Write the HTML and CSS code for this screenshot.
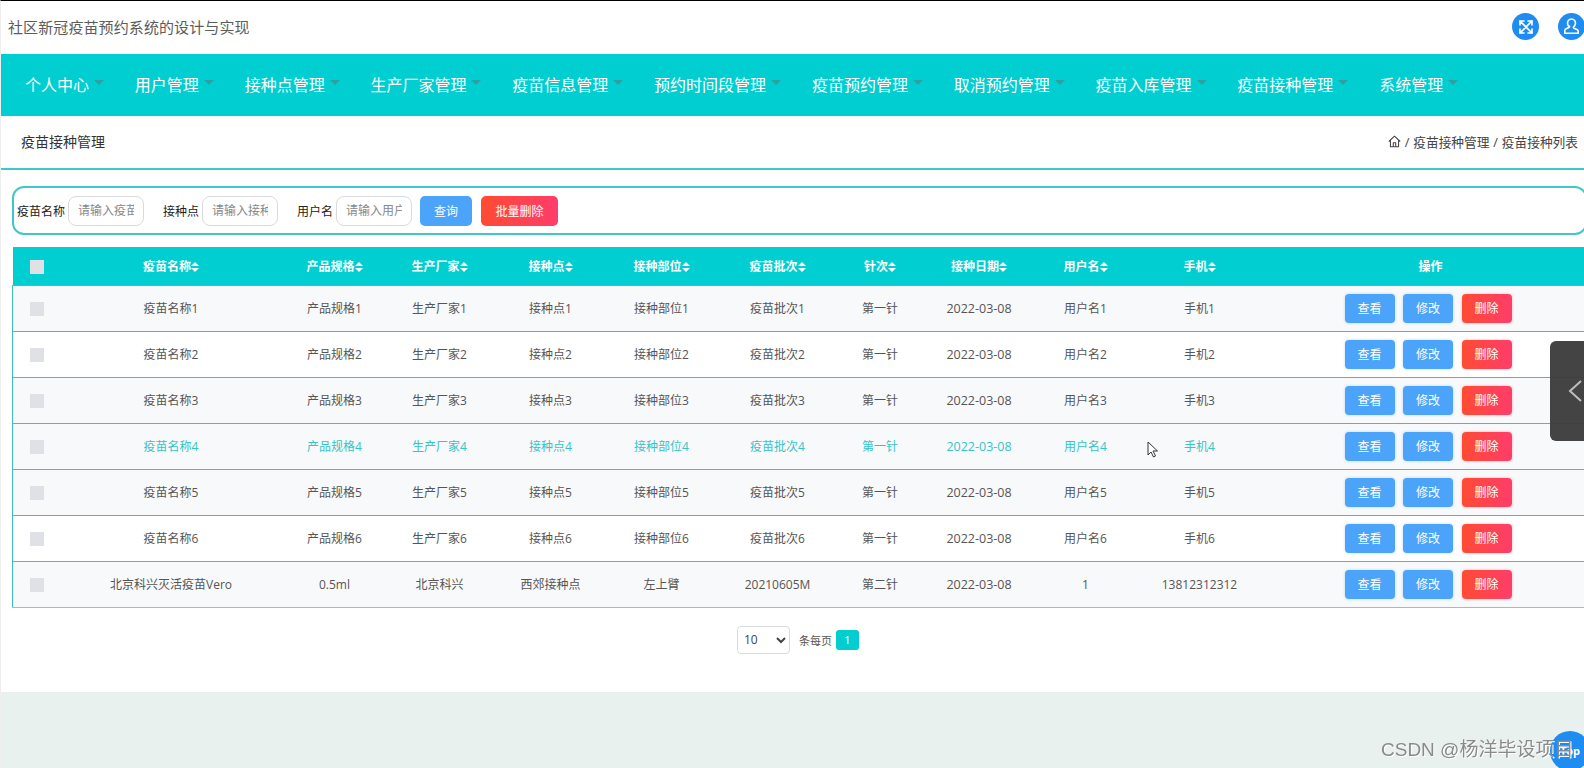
FILE: index.html
```html
<!DOCTYPE html>
<html lang="zh-CN">
<head>
<meta charset="utf-8">
<title>社区新冠疫苗预约系统的设计与实现</title>
<link rel="stylesheet" href="styles.css">
</head>
<body>
<div class="page">
  <header class="topbar">
    <div class="site-title">社区新冠疫苗预约系统的设计与实现</div>
    <div class="top-icons">
      <span class="round-icon"><svg viewBox="0 0 24 24" width="18" height="18" fill="none" stroke="#fff" stroke-width="2.200" stroke-linecap="square" stroke-linejoin="miter"><path d="M4 4 20 20M20 4 4 20M4 9V4h5M15 4h5v5M4 15v5h5M20 15v5h-5"/></svg></span>
      <span class="round-icon"><svg viewBox="0 0 24 24" width="19" height="19" fill="none" stroke="#fff" stroke-width="2" stroke-linecap="round" stroke-linejoin="round"><path d="M12 2.500a5 5 0 0 1 5 5.500c-.2 2-1.200 3.500-2.300 4.400-.5.500-.4 1.300.2 1.600l3.800 1.800c1.300.6 1.800 1.400 1.800 2.200v2.500H3.500V17c0-.8.500-1.600 1.800-2.200l3.800-1.800c.6-.3.700-1.100.2-1.600C8.200 11.500 7.200 10 7 8a5 5 0 0 1 5-5.500z"/></svg></span>
    </div>
  </header>
  <nav class="mainnav">
    <a class="nav-item">个人中心<i class="caret"></i></a>
    <a class="nav-item">用户管理<i class="caret"></i></a>
    <a class="nav-item">接种点管理<i class="caret"></i></a>
    <a class="nav-item">生产厂家管理<i class="caret"></i></a>
    <a class="nav-item">疫苗信息管理<i class="caret"></i></a>
    <a class="nav-item">预约时间段管理<i class="caret"></i></a>
    <a class="nav-item">疫苗预约管理<i class="caret"></i></a>
    <a class="nav-item">取消预约管理<i class="caret"></i></a>
    <a class="nav-item">疫苗入库管理<i class="caret"></i></a>
    <a class="nav-item">疫苗接种管理<i class="caret"></i></a>
    <a class="nav-item">系统管理<i class="caret"></i></a>
  </nav>
  <section class="crumbbar">
    <div class="crumb-title">疫苗接种管理</div>
    <div class="crumbs">
      <svg viewBox="0 0 16 16" width="13" height="13" fill="none" stroke="#444" stroke-width="1.300" stroke-linejoin="round"><path d="M1 8 8 1.500 15 8M3 6.500V14.500H13V6.500M6.500 14.500V9.500H9.500V14.500"/></svg>
      <span>/ 疫苗接种管理 / 疫苗接种列表</span>
    </div>
  </section>
  <main class="content">
    <form class="searchbox">
      <label class="field f1">疫苗名称<input class="field-input" placeholder="请输入疫苗名称"></label>
      <label class="field f2">接种点<input class="field-input" placeholder="请输入接种点"></label>
      <label class="field f3">用户名<input class="field-input" placeholder="请输入用户名"></label>
      <button type="button" class="btn-query">查询</button>
      <button type="button" class="btn-batch">批量删除</button>
    </form>
    <div class="table-wrap">
      <table class="grid">
        <colgroup>
          <col class="c1"><col class="c2"><col class="c3"><col class="c4"><col class="c5"><col class="c6"><col class="c7"><col class="c8"><col class="c9"><col class="c10"><col class="c11"><col class="c12">
        </colgroup>
        <thead>
          <tr>
            <th><i class="check"></i></th>
            <th>疫苗名称<i class="sort"></i></th>
            <th>产品规格<i class="sort"></i></th>
            <th>生产厂家<i class="sort"></i></th>
            <th>接种点<i class="sort"></i></th>
            <th>接种部位<i class="sort"></i></th>
            <th>疫苗批次<i class="sort"></i></th>
            <th>针次<i class="sort"></i></th>
            <th>接种日期<i class="sort"></i></th>
            <th>用户名<i class="sort"></i></th>
            <th>手机<i class="sort"></i></th>
            <th>操作</th>
          </tr>
        </thead>
        <tbody>
          <tr class="alt"><td><i class="check"></i></td><td>疫苗名称1</td><td>产品规格1</td><td>生产厂家1</td><td>接种点1</td><td>接种部位1</td><td>疫苗批次1</td><td>第一针</td><td class="date">2022-03-08</td><td>用户名1</td><td>手机1</td><td><div class="ops"><button type="button" class="op blue">查看</button><button type="button" class="op blue">修改</button><button type="button" class="op red">删除</button></div></td></tr>
          <tr><td><i class="check"></i></td><td>疫苗名称2</td><td>产品规格2</td><td>生产厂家2</td><td>接种点2</td><td>接种部位2</td><td>疫苗批次2</td><td>第一针</td><td class="date">2022-03-08</td><td>用户名2</td><td>手机2</td><td><div class="ops"><button type="button" class="op blue">查看</button><button type="button" class="op blue">修改</button><button type="button" class="op red">删除</button></div></td></tr>
          <tr class="alt"><td><i class="check"></i></td><td>疫苗名称3</td><td>产品规格3</td><td>生产厂家3</td><td>接种点3</td><td>接种部位3</td><td>疫苗批次3</td><td>第一针</td><td class="date">2022-03-08</td><td>用户名3</td><td>手机3</td><td><div class="ops"><button type="button" class="op blue">查看</button><button type="button" class="op blue">修改</button><button type="button" class="op red">删除</button></div></td></tr>
          <tr class="alt hover"><td><i class="check"></i></td><td>疫苗名称4</td><td>产品规格4</td><td>生产厂家4</td><td>接种点4</td><td>接种部位4</td><td>疫苗批次4</td><td>第一针</td><td class="date">2022-03-08</td><td>用户名4</td><td>手机4</td><td><div class="ops"><button type="button" class="op blue">查看</button><button type="button" class="op blue">修改</button><button type="button" class="op red">删除</button></div></td></tr>
          <tr class="alt"><td><i class="check"></i></td><td>疫苗名称5</td><td>产品规格5</td><td>生产厂家5</td><td>接种点5</td><td>接种部位5</td><td>疫苗批次5</td><td>第一针</td><td class="date">2022-03-08</td><td>用户名5</td><td>手机5</td><td><div class="ops"><button type="button" class="op blue">查看</button><button type="button" class="op blue">修改</button><button type="button" class="op red">删除</button></div></td></tr>
          <tr><td><i class="check"></i></td><td>疫苗名称6</td><td>产品规格6</td><td>生产厂家6</td><td>接种点6</td><td>接种部位6</td><td>疫苗批次6</td><td>第一针</td><td class="date">2022-03-08</td><td>用户名6</td><td>手机6</td><td><div class="ops"><button type="button" class="op blue">查看</button><button type="button" class="op blue">修改</button><button type="button" class="op red">删除</button></div></td></tr>
          <tr class="alt"><td><i class="check"></i></td><td>北京科兴灭活疫苗Vero</td><td>0.5ml</td><td>北京科兴</td><td>西郊接种点</td><td>左上臂</td><td>20210605M</td><td>第二针</td><td class="date">2022-03-08</td><td>1</td><td>13812312312</td><td><div class="ops"><button type="button" class="op blue">查看</button><button type="button" class="op blue">修改</button><button type="button" class="op red">删除</button></div></td></tr>
        </tbody>
      </table>
    </div>
    <div class="pager">
      <select class="page-size"><option>10</option></select>
      <span class="page-text">条每页</span>
      <span class="page-num">1</span>
    </div>
  </main>
  <footer class="footzone"></footer>
</div>
<div class="side-tab"><svg viewBox="0 0 16 24" width="16" height="24" fill="none" stroke="#bdbdbd" stroke-width="2"><path d="M14 2 3 12l11 10"/></svg></div>
<div class="to-top">Top</div>
<div class="watermark">CSDN @杨洋毕设项目</div>
<svg class="cursor" viewBox="0 0 12 18" width="12" height="18"><path d="M1 1v13l3-3 2.500 5 2-1-2.500-5H10.500z" fill="#fff" stroke="#333" stroke-width="1"/></svg>
</body>
</html>
```
FILE: styles.css
```css
* { box-sizing: border-box; }
html, body { margin: 0; height: 100%; overflow: hidden; }
body {
  font-family: "Open Sans", "Noto Sans CJK SC", sans-serif;
  font-size: 12px;
  color: #555;
  background: #fff;
}
.page { height: 768px; display: flex; flex-direction: column; border-top: 1px solid #000; border-left: 1px solid #eee; }

.topbar { height: 53px; flex: none; display: flex; align-items: center; justify-content: space-between; padding: 0 0 3px 7px; }
.site-title { font-size: 15px; letter-spacing: .1px; color: #5c5c5c; }
.top-icons { display: flex; gap: 19px; margin-right: -1px; margin-top: 1px; }
.round-icon { width: 27px; height: 27px; border-radius: 50%; background: #1e8cf0; display: flex; align-items: center; justify-content: center; }

.mainnav { height: 62px; flex: none; background: #00ced1; display: flex; align-items: center; padding: 0 0 2px 24px; gap: 30.800px; }
.nav-item { display: flex; align-items: center; font-size: 16px; color: #fff; white-space: nowrap; }
.caret { width: 0; height: 0; margin-left: 5px; margin-top: -3px; border-left: 5px solid transparent; border-right: 5px solid transparent; border-top: 5px solid #2f9fa4; }

.crumbbar { height: 54px; flex: none; display: flex; align-items: center; justify-content: space-between; padding: 0 6px 2px 20px; border-bottom: 2px solid #3fc8cb; }
.crumb-title { font-size: 14px; color: #333; }
.crumbs { display: flex; align-items: center; gap: 4px; font-size: 12.700px; word-spacing: .6px; color: #444; white-space: nowrap; }

.content { flex: none; height: 522px; padding: 16px 0 0 11px; overflow: hidden; }
.searchbox { height: 49px; display: flex; align-items: center; border: 2px solid #3fc8cb; border-radius: 12px; padding-left: 3px; margin-right: -3px; color: #222; }
.field { display: flex; align-items: center; gap: 3px; white-space: nowrap; font-size: 12px; }
.f2 { margin-left: 19px; }
.f3 { margin-left: 19px; }
.field-input { width: 76px; height: 30px; border: 1px solid #d8dadf; border-radius: 8px; padding: 0 9px; font: inherit; color: #555; }
.field-input::placeholder { color: #888; }
.btn-query, .btn-batch { height: 30px; border: 0; border-radius: 5px; color: #fff; font: inherit; }
.btn-query { width: 52px; margin-left: 8px; background: #4ba3fa; }
.btn-batch { width: 77px; margin-left: 9px; background: linear-gradient(90deg, #ff4b33, #ff3d6b); }

.table-wrap { margin-top: 12px; width: 1580px; }
.grid { width: 1580px; table-layout: fixed; border-collapse: collapse; }
.c1 { width: 49px; } .c2 { width: 219px; } .c3 { width: 108px; } .c4 { width: 102px; }
.c5 { width: 120px; } .c6 { width: 102px; } .c7 { width: 130px; } .c8 { width: 75px; }
.c9 { width: 123px; } .c10 { width: 90px; } .c11 { width: 138px; } .c12 { width: 324px; }
.grid th { height: 38px; padding: 0; background: #00ced1; color: #fff; font-weight: 700; font-size: 12px; text-align: center; }
.grid td { height: 46px; padding: 0; text-align: center; font-size: 12px; color: #555; border-top: 1px solid #3cc0c4; }
.grid td.date { font-size: 12.500px; }
.grid tbody tr { background: #fff; }
.grid tbody tr.alt { background: #f8f9fb; }
.grid tbody tr.hover td { color: #35c4c7; }
.grid tbody { border-left: 1px solid #3cc0c4; border-bottom: 1px solid #6fd3d6; }
.check { display: inline-block; width: 14px; height: 14px; background: #dfe1e6; vertical-align: middle; }
.sort { display: inline-block; position: relative; width: 8px; height: 10px; vertical-align: -1px; }
.sort::before, .sort::after { content: ""; position: absolute; left: 0; border-left: 4px solid transparent; border-right: 4px solid transparent; }
.sort::before { top: 0; border-bottom: 4.500px solid #fff; }
.sort::after { bottom: 0; border-top: 4.500px solid #fff; }

.ops { display: flex; justify-content: flex-start; gap: 8.500px; padding-left: 76px; }
.op { width: 50px; height: 29px; border: 0; border-radius: 4px; color: #fff; font: inherit; box-shadow: 0 0 3px rgba(75, 163, 250, .4); }
.blue { background: #4ba3fa; }
.red { background: linear-gradient(90deg, #ff4b33, #ff3d6b); box-shadow: 0 0 3px rgba(255, 75, 80, .4); }

.pager { display: flex; align-items: center; margin-top: 18px; padding-left: 725px; }
.page-size { width: 53px; height: 28px; border: 1px solid #d8dadf; border-radius: 4px; background: #fff; font: inherit; color: #444; padding-left: 2px; }
.page-text { margin-left: 9px; font-size: 11px; color: #555; }
.page-num { margin-left: 4px; width: 23px; height: 20px; border-radius: 3px; background: #00ced1; color: #fff; text-align: center; line-height: 20px; font-size: 11px; }

.footzone { flex: 1; background: #e8f1ed; }

.side-tab { position: fixed; left: 1550px; top: 341px; width: 34px; height: 100px; border-radius: 6px 0 0 6px; background: rgba(60, 60, 60, .96); display: flex; align-items: center; padding-left: 17px; }
.to-top { position: fixed; left: 1550px; top: 731px; width: 40px; height: 40px; border-radius: 50%; background: #1e8cf0; color: #fff; font-size: 11px; font-weight: 700; line-height: 40px; text-align: center; }
.watermark { position: fixed; left: 1381px; top: 736px; font-family: "Liberation Sans", "Noto Sans CJK SC", sans-serif; font-size: 19px; line-height: 28px; color: #8a8a8a; text-shadow: 1px 1px 0 #fff; white-space: nowrap; }
.cursor { position: fixed; left: 1147px; top: 441px; }
```
